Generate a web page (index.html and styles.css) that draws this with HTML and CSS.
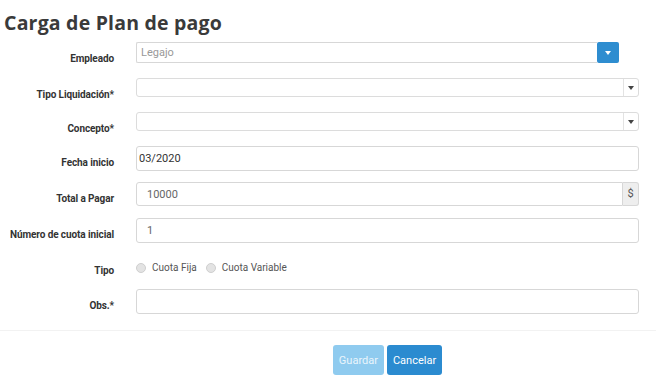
FILE: index.html
```html
<!DOCTYPE html>
<html>
<head>
  <title>Carga de Plan de pago</title>
  <link rel="stylesheet" href="styles.css">
</head>
<body>

<div class="page">
  <h1>Carga de Plan de pago</h1>
  <form class="plan-form">
    <div class="form-row">
      <label>Empleado</label>
      <div class="control combo">
        <input type="text" placeholder="Legajo">
        <button type="button" class="combo-btn"><span class="caret caret-white"></span></button>
      </div>
    </div>
    <div class="form-row short">
      <label>Tipo Liquidación*</label>
      <div class="control select">
        <span class="select-text"></span>
        <span class="select-arrow"><span class="caret"></span></span>
      </div>
    </div>
    <div class="form-row short">
      <label>Concepto*</label>
      <div class="control select">
        <span class="select-text"></span>
        <span class="select-arrow"><span class="caret"></span></span>
      </div>
    </div>
    <div class="form-row">
      <label>Fecha inicio</label>
      <div class="control">
        <input type="text" class="field tight" value="03/2020">
      </div>
    </div>
    <div class="form-row">
      <label>Total a Pagar</label>
      <div class="control addon-group">
        <input type="text" class="field muted" value="10000">
        <span class="addon">$</span>
      </div>
    </div>
    <div class="form-row">
      <label>Número de cuota inicial</label>
      <div class="control">
        <input type="text" class="field muted" value="1">
      </div>
    </div>
    <div class="form-row radios">
      <label>Tipo</label>
      <div class="control radio-list">
        <span class="radio"><span class="dot"></span>Cuota Fija</span>
        <span class="radio"><span class="dot"></span>Cuota Variable</span>
      </div>
    </div>
    <div class="form-row">
      <label>Obs.*</label>
      <div class="control">
        <input type="text" class="field">
      </div>
    </div>
  </form>
  <div class="footer">
    <div class="actions">
      <button type="button" class="btn btn-disabled">Guardar</button>
      <button type="button" class="btn btn-primary">Cancelar</button>
    </div>
  </div>
</div>

</body>
</html>
```

FILE: styles.css
```css
body {
  margin: 0;
  font-family: Roboto, "Liberation Sans", Arial, sans-serif;
  color: #333;
  background: #fff;
}
.page {
  width: 656px;
}
h1 {
  margin: 0;
  padding: 11px 0 0 4px;
  height: 31px;
  font-family: "Open Sans", Roboto, sans-serif;
  font-size: 19.5px;
  font-weight: 700;
  letter-spacing: 0.2px;
  color: #3a3a3a;
  line-height: 24px;
}
.form-row {
  display: flex;
  height: 36px;
}
.form-row.short {
  height: 34px;
}
.form-row.radios {
  height: 35px;
}
.form-row label {
  width: 114px;
  flex: none;
  margin-right: 22px;
  text-align: right;
  font-size: 10px;
  font-weight: 700;
  letter-spacing: -0.1px;
  color: #333;
  padding-top: 10px;
  line-height: 13px;
  height: 13px;
}
.control {
  width: 503px;
  flex: none;
  display: flex;
  align-self: flex-start;
}
input {
  font-family: inherit;
  outline: none;
}
.combo input {
  flex: 1;
  height: 21px;
  box-sizing: border-box;
  border: 1px solid #d7d7d7;
  border-right: none;
  border-radius: 2px 0 0 2px;
  padding: 0 4px;
  font-size: 11px;
  color: #555;
}
.combo input::placeholder {
  color: #999;
}
.combo-btn {
  width: 22px;
  height: 21px;
  border: none;
  border-radius: 2px;
  background: #2e8dd0;
  padding: 0;
  display: flex;
  align-items: center;
  justify-content: center;
  margin-right: 20px;
}
.caret {
  display: block;
  width: 0;
  height: 0;
  border-left: 3.5px solid transparent;
  border-right: 3.5px solid transparent;
  border-top: 4px solid #444;
}
.caret-white {
  border-top-color: #fff;
}
.select {
  height: 19px;
  box-sizing: border-box;
  border: 1px solid #dcdcdc;
  border-radius: 3px;
}
.select-text {
  flex: 1;
}
.select-arrow {
  width: 14px;
  border-left: 1px solid #e3e3e3;
  display: flex;
  align-items: center;
  justify-content: center;
}
.field {
  width: 100%;
  height: 25px;
  box-sizing: border-box;
  border: 1px solid #d7d7d7;
  border-radius: 3px;
  padding: 0 10px;
  font-size: 11px;
  color: #666;
}
.field.tight {
  padding: 0 2px;
  color: #333;
}
.addon-group .field {
  flex: 1;
  width: auto;
  height: 24px;
  border-radius: 3px 0 0 3px;
}
.addon {
  width: 16px;
  height: 24px;
  box-sizing: border-box;
  border: 1px solid #d7d7d7;
  border-left: none;
  border-radius: 0 3px 3px 0;
  background: #eee;
  font-size: 11px;
  color: #555;
  text-align: center;
  line-height: 22px;
}
.radio-list {
  padding-top: 7px;
  gap: 9px;
}
.radio {
  display: flex;
  align-items: center;
  font-size: 10px;
  color: #555;
  line-height: 13px;
}
.dot {
  width: 8px;
  height: 8px;
  border-radius: 50%;
  border: 1px solid #cfcfcf;
  background: #e3e3e3;
  margin-right: 6px;
}
.footer {
  margin-top: 5px;
  border-top: 1px solid #f2f2f2;
  padding: 14px 0;
}
.actions {
  margin-left: 136px;
  width: 503px;
  display: flex;
  justify-content: center;
  gap: 3px;
}
.btn {
  height: 30px;
  border: none;
  border-radius: 3px;
  font-family: inherit;
  font-size: 11px;
  color: #fff;
  padding: 0 6px;
}
.btn-disabled {
  background: #8fcbef;
  color: #eaf5fc;
}
.btn-primary {
  background: #2b8bd0;
}
```
